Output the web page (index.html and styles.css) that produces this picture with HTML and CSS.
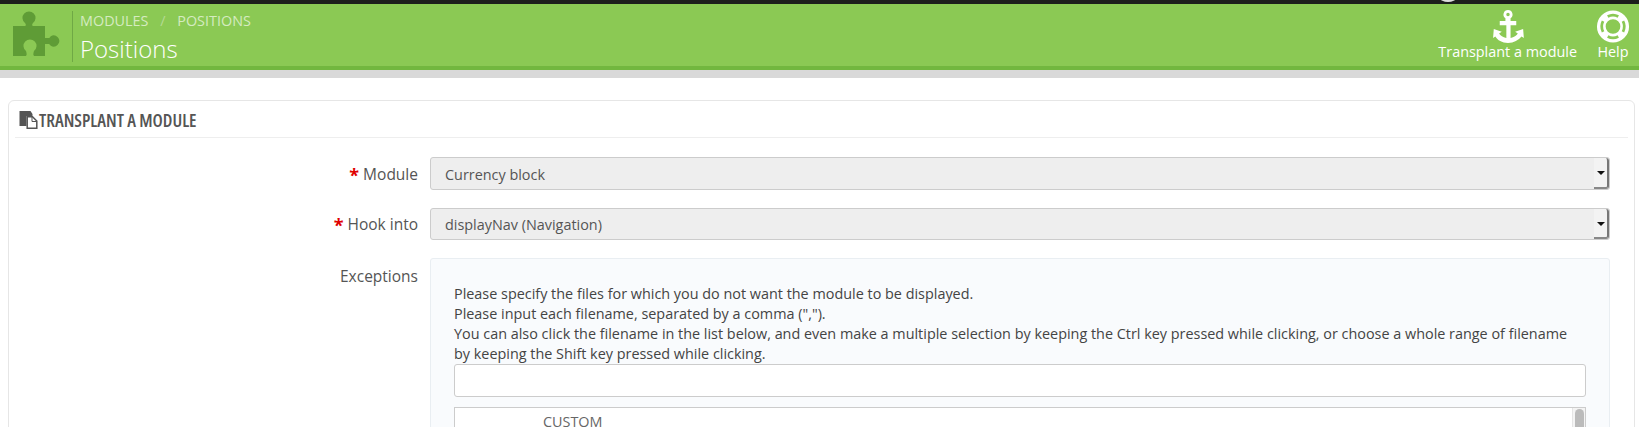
FILE: index.html
```html
<!DOCTYPE html>
<html lang="en">
<head>
  <meta charset="UTF-8">
  <title>Positions</title>
  <link rel="stylesheet" href="styles.css">
</head>
<body>
  <div class="topbar"><span class="topbar-chip"></span></div>

  <header class="page-head">
    <svg class="puzzle" viewBox="0 0 48 48" width="48" height="48">
      <path d="M0 16H11C13 16 13.500 15 12 13A6.500 6.500 0 1 1 20 13C18.500 15 19 16 21 16H32V28H36Q36.500 28 37.500 26.500A5.500 5.500 0 1 1 37.500 35.500Q36.500 34 36 34H32V46H22C20 46 20 44 21 41A6.500 6.500 0 1 0 13 41C14 44 14 46 12 46H0Z"/>
    </svg>
    <div class="titles">
      <div class="breadcrumb">
        <span>MODULES</span>
        <span class="sep">/</span>
        <span>POSITIONS</span>
      </div>
      <h1>Positions</h1>
    </div>
    <nav class="toolbar">
      <a class="tool">
        <svg viewBox="0 0 36 36" width="36" height="33">
          <path d="M18 0a5 5 0 0 1 2.800 9.100V12h6.200v4.500h-6.200v14c3.800-.6 6.500-2.500 7.900-4.800l-2.900-2 8.700-3 .8 9.800-2.500-1.700C29.500 33 24.500 35.500 18 36 11.500 35.500 6.500 33 4.200 28.800l-2.500 1.700.8-9.800 8.700 3-2.900 2c1.400 2.300 4.100 4.200 7.900 4.800v-14H9V12h6.200V9.100A5 5 0 0 1 18 0zm0 3a1.900 1.900 0 1 0 0 3.800 1.900 1.900 0 0 0 0-3.800z" fill-rule="evenodd"/>
        </svg>
        <span>Transplant a module</span>
      </a>
      <a class="tool">
        <svg viewBox="0 0 36 36" width="34" height="33">
          <path d="M18 0.500a17.500 17.500 0 1 1 0 35 17.500 17.500 0 0 1 0-35zm0 9.500a8 8 0 1 0 0 16 8 8 0 0 0 0-16z" fill-rule="evenodd"/>
          <path class="ring-gap" d="M11.530 5.810A13.800 13.800 0 0 1 24.470 5.810L23.070 8.460A10.800 10.800 0 0 0 12.930 8.460ZM30.190 11.530A13.800 13.800 0 0 1 30.190 24.470L27.540 23.070A10.800 10.800 0 0 0 27.540 12.930ZM24.470 30.190A13.800 13.800 0 0 1 11.530 30.190L12.930 27.540A10.800 10.800 0 0 0 23.070 27.540ZM5.810 24.470A13.800 13.800 0 0 1 5.810 11.530L8.460 12.930A10.800 10.800 0 0 0 8.460 23.070Z"/>
        </svg>
        <span>Help</span>
      </a>
    </nav>
  </header>
  <div class="head-shadow"></div>

  <section class="panel">
    <h2 class="panel-heading">
      <svg viewBox="0 0 18 18" width="19" height="18">
        <path d="M0 0H11L13 3V5H7V15H0z" fill="#555"/>
        <path d="M7.700 5.700H13L17.300 10V17.300H7.700z" fill="#fff" stroke="#555" stroke-width="1.500"/>
        <path d="M12.500 5.700V10.500H17.300" fill="none" stroke="#555"/>
      </svg>
      TRANSPLANT A MODULE
    </h2>

    <div class="form-row">
      <label class="form-label"><span class="req">*</span> Module</label>
      <div class="fake-select">
        <span>Currency block</span>
        <span class="select-btn"></span>
      </div>
    </div>

    <div class="form-row hook-row">
      <label class="form-label"><span class="req">*</span> Hook into</label>
      <div class="fake-select">
        <span>displayNav (Navigation)</span>
        <span class="select-btn"></span>
      </div>
    </div>

    <div class="form-row">
      <label class="form-label exc-label">Exceptions</label>
      <div class="well">
        <p>Please specify the files for which you do not want the module to be displayed.<br>
        Please input each filename, separated by a comma (",").<br>
        You can also click the filename in the list below, and even make a multiple selection by keeping the Ctrl key pressed while clicking, or choose a whole range of filename by keeping the Shift key pressed while clicking.</p>
        <input class="text-input" type="text">
        <div class="listbox">
          <span>CUSTOM</span>
          <span class="scroll-track"><span class="scroll-thumb"></span></span>
        </div>
      </div>
    </div>
  </section>
</body>
</html>
```

FILE: styles.css
```css
html, body {
  height: 427px;
  overflow: hidden;
}

body {
  margin: 0;
  background-color: #fff;
  font-family: 'Open Sans', sans-serif;
  font-size: 14.4px;
  color: #555;
}

.topbar {
  height: 4px;
  background-color: #1d1f1c;
  position: relative;
  overflow: hidden;
}

.topbar-chip {
  position: absolute;
  left: 1440px;
  top: -6px;
  width: 16px;
  height: 8px;
  border-radius: 50%;
  background-color: #ddd;
}

.page-head {
  height: 62px;
  background-color: #8bc954;
  border-bottom: 4px solid #72b73f;
  display: flex;
  align-items: flex-start;
}

.puzzle {
  fill: #5f9c36;
  margin: 6px 11px 0 13px;
  flex: none;
}

.titles {
  height: 51px;
  margin-top: 7px;
  padding-left: 7px;
  border-left: 1px solid #6fa845;
}

.breadcrumb {
  font-size: 14.4px;
  line-height: 20px;
  color: #d5ebc0;
}

.breadcrumb .sep {
  margin: 0 8px;
  color: #b5da93;
}

h1 {
  margin: 4px 0 0;
  font-size: 24px;
  font-weight: 300;
  line-height: 28px;
  color: #fff;
}

.toolbar {
  margin-left: auto;
  display: flex;
  gap: 19px;
  padding-right: 9px;
  padding-top: 6px;
}

.tool {
  display: flex;
  flex-direction: column;
  align-items: center;
  color: #fff;
  font-size: 14.4px;
  line-height: 18px;
}

.tool svg {
  fill: #fff;
  display: block;
}

.tool svg .ring-gap {
  fill: #8bc954;
}

.head-shadow {
  height: 8px;
  background-color: #d9d9d9;
}

.panel {
  margin: 22px 4px 0 8px;
  padding: 0 6px;
  border: 1px solid #e6e6e6;
  border-radius: 6px;
  height: 340px;
}

.panel-heading {
  display: flex;
  align-items: center;
  gap: 1px;
  height: 37px;
  margin: 0 0 19px;
  padding-left: 4px;
  padding-top: 2px;
  box-sizing: border-box;
  border-bottom: 1px solid #eee;
  font-family: 'Open Sans', sans-serif;
  font-stretch: 80%;
  font-size: 18px;
  font-weight: 600;
  color: #555;
}

.form-row {
  display: flex;
  align-items: flex-start;
}

.hook-row {
  margin-top: 17px;
  margin-bottom: 17px;
}

.form-label {
  width: 403px;
  text-align: right;
  font-size: 15.5px;
  line-height: 33px;
  padding-top: 1px;
  flex: none;
}

.hook-row .form-label {
  padding-top: 0;
}

.exc-label {
  line-height: 20px;
  margin-top: 8px;
  padding-top: 0;
}

.req {
  color: #e00000;
  font-size: 18px;
  font-weight: 700;
  line-height: 1;
  vertical-align: -2px;
}

.fake-select {
  margin-left: 12px;
  width: 1180px;
  height: 33px;
  box-sizing: border-box;
  display: flex;
  justify-content: space-between;
  align-items: center;
  background-color: #eee;
  border: 1px solid #ccc;
  border-radius: 3px;
  padding-left: 14px;
  padding-top: 1px;
  color: #555;
}

.hook-row .fake-select {
  height: 32px;
}

.select-btn {
  width: 15px;
  height: calc(100% + 1px);
  margin-top: -1px;
  background-color: #f3f3f3;
  border-right: 2px solid #777;
  border-bottom: 2px solid #888;
  border-radius: 0 3px 3px 0;
  box-sizing: border-box;
  position: relative;
}

.select-btn::after {
  content: "";
  position: absolute;
  left: 3px;
  top: 13px;
  border-left: 4px solid transparent;
  border-right: 4px solid transparent;
  border-top: 4px solid #111;
}

.well {
  margin-left: 12px;
  width: 1180px;
  height: 200px;
  box-sizing: border-box;
  background-color: #f9fbfd;
  border: 1px solid #e9eef2;
  border-radius: 3px;
  padding: 25px 23px 0;
  color: #444;
}

.well p {
  margin: 0;
  line-height: 20px;
}

.text-input {
  display: block;
  width: 100%;
  height: 33px;
  box-sizing: border-box;
  background-color: #fff;
  border: 1px solid #ccc;
  border-radius: 3px;
  margin-bottom: 10px;
}

.listbox {
  height: 80px;
  background-color: #fff;
  border: 1px solid #ccc;
  padding-left: 88px;
  line-height: 28px;
  color: #666;
  position: relative;
}

.scroll-track {
  position: absolute;
  right: 0;
  top: 0;
  bottom: 0;
  width: 12px;
  background-color: #f4f4f4;
  border-left: 1px solid #e5e5e5;
}

.scroll-thumb {
  display: block;
  width: 9px;
  height: 40px;
  margin: 1px 0 0 2px;
  border-radius: 5px;
  background-color: #bbb;
}
```
